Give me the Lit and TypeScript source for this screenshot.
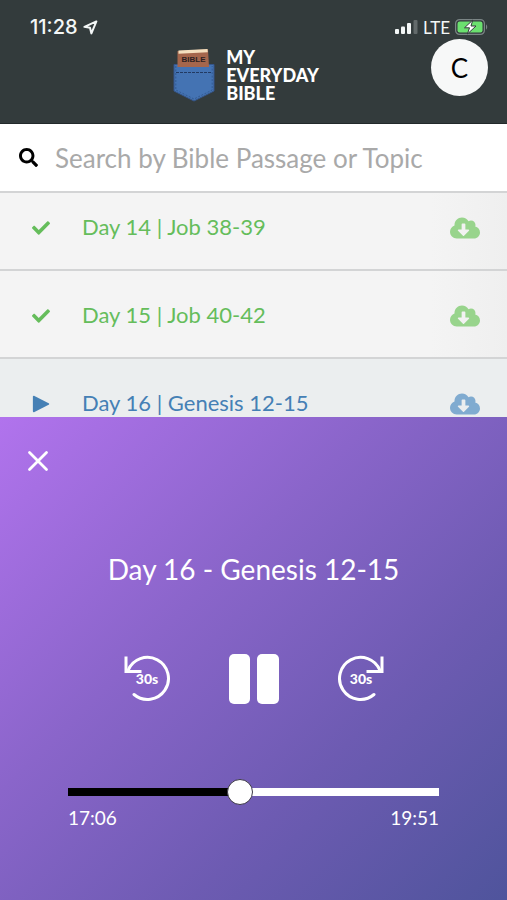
import { LitElement, html, css, svg } from "lit";
import { customElement, property, state } from "lit/decorators.js";

type Status = "done" | "playing";
interface Reading {
  label: string;
  status: Status;
}

const cloudIcon = svg`<path d="M537.6 226.6c4.1-10.7 6.4-22.4 6.4-34.6 0-53-43-96-96-96-19.7 0-38.1 6-53.3 16.2C367 64.2 315.3 32 256 32c-88.4 0-160 71.6-160 160 0 2.7.1 5.4.2 8.1C40.2 219.8 0 273.2 0 336c0 79.5 64.5 144 144 144h368c70.7 0 128-57.3 128-128 0-61.9-44-113.6-102.4-125.4zm-132.9 88.7L299.3 420.7c-6.2 6.2-16.4 6.2-22.6 0L171.3 315.3c-10.1-10.1-2.9-27.3 11.3-27.3H248V176c0-8.8 7.2-16 16-16h48c8.8 0 16 7.2 16 16v112h65.4c14.2 0 21.4 17.2 11.3 27.3z"/>`;
const checkIcon = svg`<path d="M173.898 439.404l-166.4-166.4c-9.997-9.997-9.997-26.206 0-36.204l36.203-36.204c9.997-9.998 26.207-9.998 36.204 0L192 312.69 432.095 72.596c9.997-9.997 26.207-9.997 36.204 0l36.203 36.204c9.997 9.997 9.997 26.206 0 36.204l-294.4 294.401c-9.998 9.997-26.207 9.997-36.204-.001z"/>`;
const playIcon = svg`<path d="M24 52C24 24 46 14 70 26L474 232C494 243 494 269 474 280L70 486C46 498 24 488 24 460Z"/>`;
const searchIcon = svg`<path d="M505 442.7L405.3 343c-4.5-4.5-10.6-7-17-7H372c27.6-35.3 44-79.7 44-128C416 93.1 322.9 0 208 0S0 93.1 0 208s93.1 208 208 208c48.3 0 92.7-16.4 128-44v16.3c0 6.4 2.5 12.5 7 17l99.7 99.7c9.4 9.4 24.6 9.4 33.9 0l28.3-28.3c9.4-9.4 9.4-24.6.1-34zM208 336c-70.7 0-128-57.2-128-128 0-70.7 57.2-128 128-128 70.7 0 128 57.2 128 128 0 70.7-57.2 128-128 128z"/>`;

const base = css`
  * {
    box-sizing: border-box;
  }
  svg {
    display: block;
  }
  button {
    margin: 0;
    padding: 0;
    border: 0;
    background: none;
    color: inherit;
    font: inherit;
    cursor: pointer;
  }
`;

@customElement("status-bar")
export class StatusBar extends LitElement {
  static styles = [
    base,
    css`
      :host {
        display: flex;
        align-items: center;
        justify-content: space-between;
        height: 24px;
        padding: 0 19px 0 30px;
        font-family: Inter, sans-serif;
        color: #f4f7f7;
      }
      .group {
        display: flex;
        align-items: center;
        gap: 5px;
      }
      .time {
        font-size: 20px;
        font-weight: 500;
      }
      .network {
        font-family: Lato, sans-serif;
        font-size: 17px;
      }
    `,
  ];

  render() {
    return html`
      <div class="group">
        <span class="time">11:28</span>
        <svg width="15" height="15" viewBox="0 0 15 15" fill="none" stroke="currentColor" stroke-width="2" stroke-linejoin="round" aria-hidden="true">
          <path d="M13.4 1.4 1.4 6.8 7 7.8 8.4 13.4Z" />
        </svg>
      </div>
      <div class="group">
        <svg width="23" height="14" viewBox="0 0 23 14" fill="currentColor" aria-hidden="true">
          <rect x="0" y="9" width="4" height="5" rx="1" />
          <rect x="6" y="6.500" width="4" height="7.500" rx="1" />
          <rect x="12" y="3" width="4" height="11" rx="1" />
          <rect x="18.500" y="0" width="4" height="14" rx="1" opacity=".25" />
        </svg>
        <span class="network">LTE</span>
        <svg width="33" height="16" viewBox="0 0 33 16" aria-hidden="true">
          <rect x=".6" y=".6" width="28.800" height="14.800" rx="4" fill="none" stroke="#7b8585" stroke-width="1.200" />
          <rect x="2.500" y="2.500" width="25" height="11" rx="2.200" fill="#6be06f" />
          <path d="M31 5.500v5c1.600-.6 1.600-4.400 0-5z" fill="#7b8585" />
          <path d="M17.800 1 9.500 8.800h5L12.400 15l8.600-8h-5z" fill="#fff" stroke="#333b3c" stroke-width="1" />
        </svg>
      </div>
    `;
  }
}

@customElement("brand-header")
export class BrandHeader extends LitElement {
  static styles = [
    base,
    css`
      :host {
        display: grid;
        grid-template-columns: 1fr auto 1fr;
        align-items: start;
        padding: 0 19px 0 4px;
      }
      .brand {
        grid-column: 2;
        display: flex;
        align-items: center;
        gap: 11px;
        margin-top: 9px;
        color: #fff;
        text-decoration: none;
      }
      .name {
        font-size: 18px;
        line-height: 18px;
        font-weight: 900;
      }
      .cover {
        font: 700 8px "Liberation Sans", sans-serif;
      }
      .avatar {
        justify-self: end;
        width: 57px;
        height: 57px;
        border-radius: 50%;
        background: #f7f8f8;
        color: #000;
        font-size: 26px;
      }
    `,
  ];

  render() {
    return html`
      <a class="brand" href="#home">
        <svg width="42" height="54" viewBox="0 0 42 54" aria-hidden="true">
          <path d="M1 16.500H41V43L21 53 1 43Z" fill="#4473b3" stroke="#35558a" stroke-width="1" stroke-linejoin="round" />
          <path d="M3 24.500H39" stroke="#223a62" stroke-width="1.200" stroke-dasharray="3 1" />
          <path d="M2.800 18V42L21 51 39.200 42V18" fill="none" stroke="#2f5489" stroke-width=".8" stroke-dasharray="2 1.500" />
          <path d="M4.500 3 35 1.200 36 19H4.500Z" fill="#a5664c" />
          <path d="M5.500 2.600 34.500 1 34.800 4.200 5.500 5.800Z" fill="#f4e0bf" />
          <text class="cover" x="20.500" y="14" text-anchor="middle" fill="#2c2122">BIBLE</text>
        </svg>
        <span class="name">MY<br />EVERYDAY<br />BIBLE</span>
      </a>
      <button class="avatar" aria-label="Account">C</button>
    `;
  }
}

@customElement("reading-row")
export class ReadingRow extends LitElement {
  @property() label = "";
  @property({ reflect: true }) status: Status = "done";

  static styles = [
    base,
    css`
      :host {
        display: grid;
        grid-template-columns: 20px 1fr 30px;
        column-gap: 30px;
        align-items: center;
        height: 88px;
        padding: 0 27px 0 32px;
        border-bottom: 2px solid #d3d4d5;
        background: linear-gradient(90deg, #f4f4f4 85%, #efefef);
        color: #65bd5b;
        font-size: 22px;
      }
      :host([status="playing"]) {
        background: #ebeeef;
        color: #4580b5;
      }
      .open {
        text-align: left;
      }
      .mark,
      .download {
        padding-top: 4px;
      }
      .download {
        color: #98d48c;
      }
      :host([status="playing"]) .download {
        color: #80abd0;
      }
    `,
  ];

  render() {
    return html`
      <span class="mark">
        <svg width="18" height="18" viewBox="0 0 512 512" fill="currentColor" aria-hidden="true">
          ${this.status === "done" ? checkIcon : playIcon}
        </svg>
      </span>
      <button class="open">${this.label}</button>
      <button class="download" aria-label="Download ${this.label}">
        <svg width="30" height="24" viewBox="0 0 640 512" fill="currentColor" aria-hidden="true">${cloudIcon}</svg>
      </button>
    `;
  }
}

@customElement("audio-player")
export class AudioPlayer extends LitElement {
  @state() private progress = 46;

  static styles = [
    base,
    css`
      :host {
        display: block;
        padding: 32px 68px 70px;
        background: linear-gradient(135deg, #b173ed 0%, #8a65ca 38%, #6d5bb2 68%, #4f549c 100%);
        color: #fff;
      }
      .close {
        display: block;
        margin-left: -42px;
      }
      .title {
        margin: 78px 0 0;
        font-size: 28px;
        line-height: 36px;
        font-weight: 400;
        text-align: center;
      }
      .controls {
        display: flex;
        align-items: center;
        justify-content: center;
        gap: 56px;
        margin-top: 66px;
      }
      .skip-label {
        font-size: 14px;
        font-weight: 900;
      }
      .seek {
        appearance: none;
        display: block;
        width: 100%;
        height: 26px;
        margin: 74px 0 0;
        background: transparent;
      }
      .seek::-webkit-slider-runnable-track {
        height: 8px;
        background: linear-gradient(90deg, #000 var(--progress), #fff var(--progress));
      }
      .seek::-webkit-slider-thumb {
        appearance: none;
        width: 26px;
        height: 26px;
        margin-top: -9px;
        border: 1px solid #3c3946;
        border-radius: 50%;
        background: #fff;
      }
      .times {
        display: flex;
        justify-content: space-between;
        font-size: 19px;
        line-height: 25px;
      }
    `,
  ];

  private onSeek(e: Event) {
    this.progress = Number((e.target as HTMLInputElement).value);
  }

  render() {
    return html`
      <button class="close" aria-label="Close player">
        <svg width="24" height="24" viewBox="0 0 24 24" stroke="currentColor" stroke-width="2.800" stroke-linecap="round" aria-hidden="true">
          <path d="M3.500 3.500 20.500 20.500M20.500 3.500 3.500 20.500" />
        </svg>
      </button>
      <h2 class="title">Day 16 - Genesis 12-15</h2>
      <div class="controls">
        <button aria-label="Back 30 seconds">
          <svg width="50" height="50" viewBox="0 0 50 50" fill="none" stroke="currentColor" stroke-width="3" stroke-linecap="round">
            <path d="M6 16.500A21 21 0 1 1 12 40.500" />
            <path d="M4 4V17.500H18" stroke-linecap="square" />
            <text class="skip-label" x="25" y="30" text-anchor="middle" fill="currentColor" stroke="none">30s</text>
          </svg>
        </button>
        <button aria-label="Pause">
          <svg width="52" height="52" viewBox="0 0 52 52" fill="currentColor" aria-hidden="true">
            <rect x="1" y="1" width="21" height="50" rx="5" />
            <rect x="29" y="1" width="22" height="50" rx="5" />
          </svg>
        </button>
        <button aria-label="Forward 30 seconds">
          <svg width="50" height="50" viewBox="0 0 50 50" fill="none" stroke="currentColor" stroke-width="3" stroke-linecap="round">
            <path d="M44 16.500A21 21 0 1 0 38 40.500" />
            <path d="M46 4V17.500H32" stroke-linecap="square" />
            <text class="skip-label" x="25" y="30" text-anchor="middle" fill="currentColor" stroke="none">30s</text>
          </svg>
        </button>
      </div>
      <input
        class="seek"
        type="range"
        min="0"
        max="100"
        aria-label="Playback position"
        .value=${String(this.progress)}
        style="--progress: ${this.progress}%"
        @input=${this.onSeek}
      />
      <div class="times"><span>17:06</span><span>19:51</span></div>
    `;
  }
}

@customElement("app-root")
export class AppRoot extends LitElement {
  private readings: Reading[] = [
    { label: "Day 14 | Job 38-39", status: "done" },
    { label: "Day 15 | Job 40-42", status: "done" },
    { label: "Day 16 | Genesis 12-15", status: "playing" },
  ];

  static styles = [
    base,
    css`
      :host {
        display: flex;
        flex-direction: column;
        height: 100vh;
        overflow: hidden;
        font-family: Lato, sans-serif;
      }
      .top {
        flex: none;
        padding: 15px 0 21px;
        background: #333b3c;
        border-bottom: 1px solid #22292a;
      }
      .search {
        flex: none;
        display: flex;
        align-items: center;
        gap: 17px;
        height: 69px;
        padding: 0 19px;
        border-bottom: 2px solid #d3d4d5;
        background: #fff;
      }
      .field {
        flex: 1;
        min-width: 0;
        padding: 0;
        border: 0;
        outline: 0;
        background: none;
        color: #333;
        font: 400 26px/32px Lato, sans-serif;
      }
      .field::placeholder {
        color: #a9a9a9;
        opacity: 1;
      }
      .list {
        flex: 1;
        min-height: 0;
        display: flex;
        flex-direction: column;
        overflow: hidden;
      }
      .list reading-row {
        flex: none;
      }
      .list reading-row:first-child {
        margin-top: -10px;
      }
      audio-player {
        flex: none;
      }
    `,
  ];

  render() {
    return html`
      <header class="top">
        <status-bar></status-bar>
        <brand-header></brand-header>
      </header>
      <label class="search">
        <svg width="19" height="19" viewBox="0 0 512 512" aria-hidden="true">${searchIcon}</svg>
        <input class="field" type="text" placeholder="Search by Bible Passage or Topic" aria-label="Search by Bible Passage or Topic" />
      </label>
      <main class="list">
        ${this.readings.map((r) => html`<reading-row .label=${r.label} .status=${r.status}></reading-row>`)}
      </main>
      <audio-player></audio-player>
    `;
  }
}
